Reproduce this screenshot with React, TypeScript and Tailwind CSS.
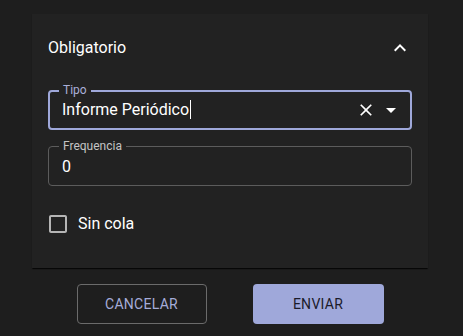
const font = { fontFamily: "Roboto, 'Liberation Sans', sans-serif" };

function ChevronUp() {
  return (
    <svg viewBox="0 0 24 24" className="h-6 w-6 fill-white">
      <path d="M12 8l-6 6 1.41 1.41L12 10.83l4.59 4.58L18 14z" />
    </svg>
  );
}

function ClearIcon() {
  return (
    <svg viewBox="0 0 24 24" className="h-5 w-5 fill-white">
      <path d="M19 6.41 17.59 5 12 10.59 6.41 5 5 6.41 10.59 12 5 17.59 6.41 19 12 13.41 17.59 19 19 17.59 13.41 12z" />
    </svg>
  );
}

function DropIcon() {
  return (
    <svg viewBox="0 0 24 24" className="h-6 w-6 fill-white">
      <path d="M7 10l5 5 5-5z" />
    </svg>
  );
}

function BoxIcon() {
  return (
    <svg viewBox="0 0 24 24" className="h-6 w-6 fill-[#b5b5b5]">
      <path d="M19 5v14H5V5h14m0-2H5c-1.1 0-2 .9-2 2v14c0 1.1.9 2 2 2h14c1.1 0 2-.9 2-2V5c0-1.1-.9-2-2-2z" />
    </svg>
  );
}

export default function App() {
  return (
    <div style={font} className="h-[336px] w-[463px] bg-[#1e1e1e] pl-[32px] pt-[14px] text-white">
      <div className="w-[396px] h-[254px] bg-[#222222] shadow-[0_2px_1px_-1px_rgba(0,0,0,0.6),0_1px_1px_0_rgba(0,0,0,0.4)]">
        {/* header */}
        <div className="flex h-16 items-center justify-between px-4 pt-1">
          <span className="text-base">Obligatorio</span>
          <ChevronUp />
        </div>

        <div className="flex flex-col px-4 pt-3">
          {/* Tipo */}
          <div className="relative flex h-10 items-center rounded border-2 border-[#9fa8da] pl-[12px] pr-[7px]">
            <span className="absolute -top-[9px] left-[9px] bg-[#222222] px-[4px] text-xs leading-[14px] text-[#aab0d8]">
              Tipo
            </span>
            <span className="flex-1 text-base leading-5">
              <span className="border-r border-white pr-[1px]">Informe Periódico</span>
            </span>
            <span className="mr-[3px]">
              <ClearIcon />
            </span>
            <DropIcon />
          </div>

          {/* Frequencia */}
          <div className="relative mt-4 flex h-10 items-center rounded border border-[#5c5c5c] pl-[13px]">
            <span className="absolute -top-[8px] left-[10px] bg-[#222222] px-[4px] text-xs leading-[14px] text-[#c4c4c4]">
              Frequencia
            </span>
            <span className="text-base leading-5 pt-[2px]">0</span>
          </div>

          {/* checkbox */}
          <div className="mt-[26px] flex items-center gap-[8px]">
            <span className="-ml-[2px]">
              <BoxIcon />
            </span>
            <span className="text-base">Sin cola</span>
          </div>
        </div>
      </div>

      <div className="flex w-[396px] justify-center gap-[46px] pt-[16px]">
        <button className="h-10 w-[130px] rounded border border-[#6b6b6b] text-sm font-normal tracking-[0.02em] text-[#a5acd9]">
          CANCELAR
        </button>
        <button className="h-10 w-[131px] rounded bg-[#9fa8da] text-sm font-normal tracking-[0.02em] text-[#1b1b2a]">
          ENVIAR
        </button>
      </div>
    </div>
  );
}
